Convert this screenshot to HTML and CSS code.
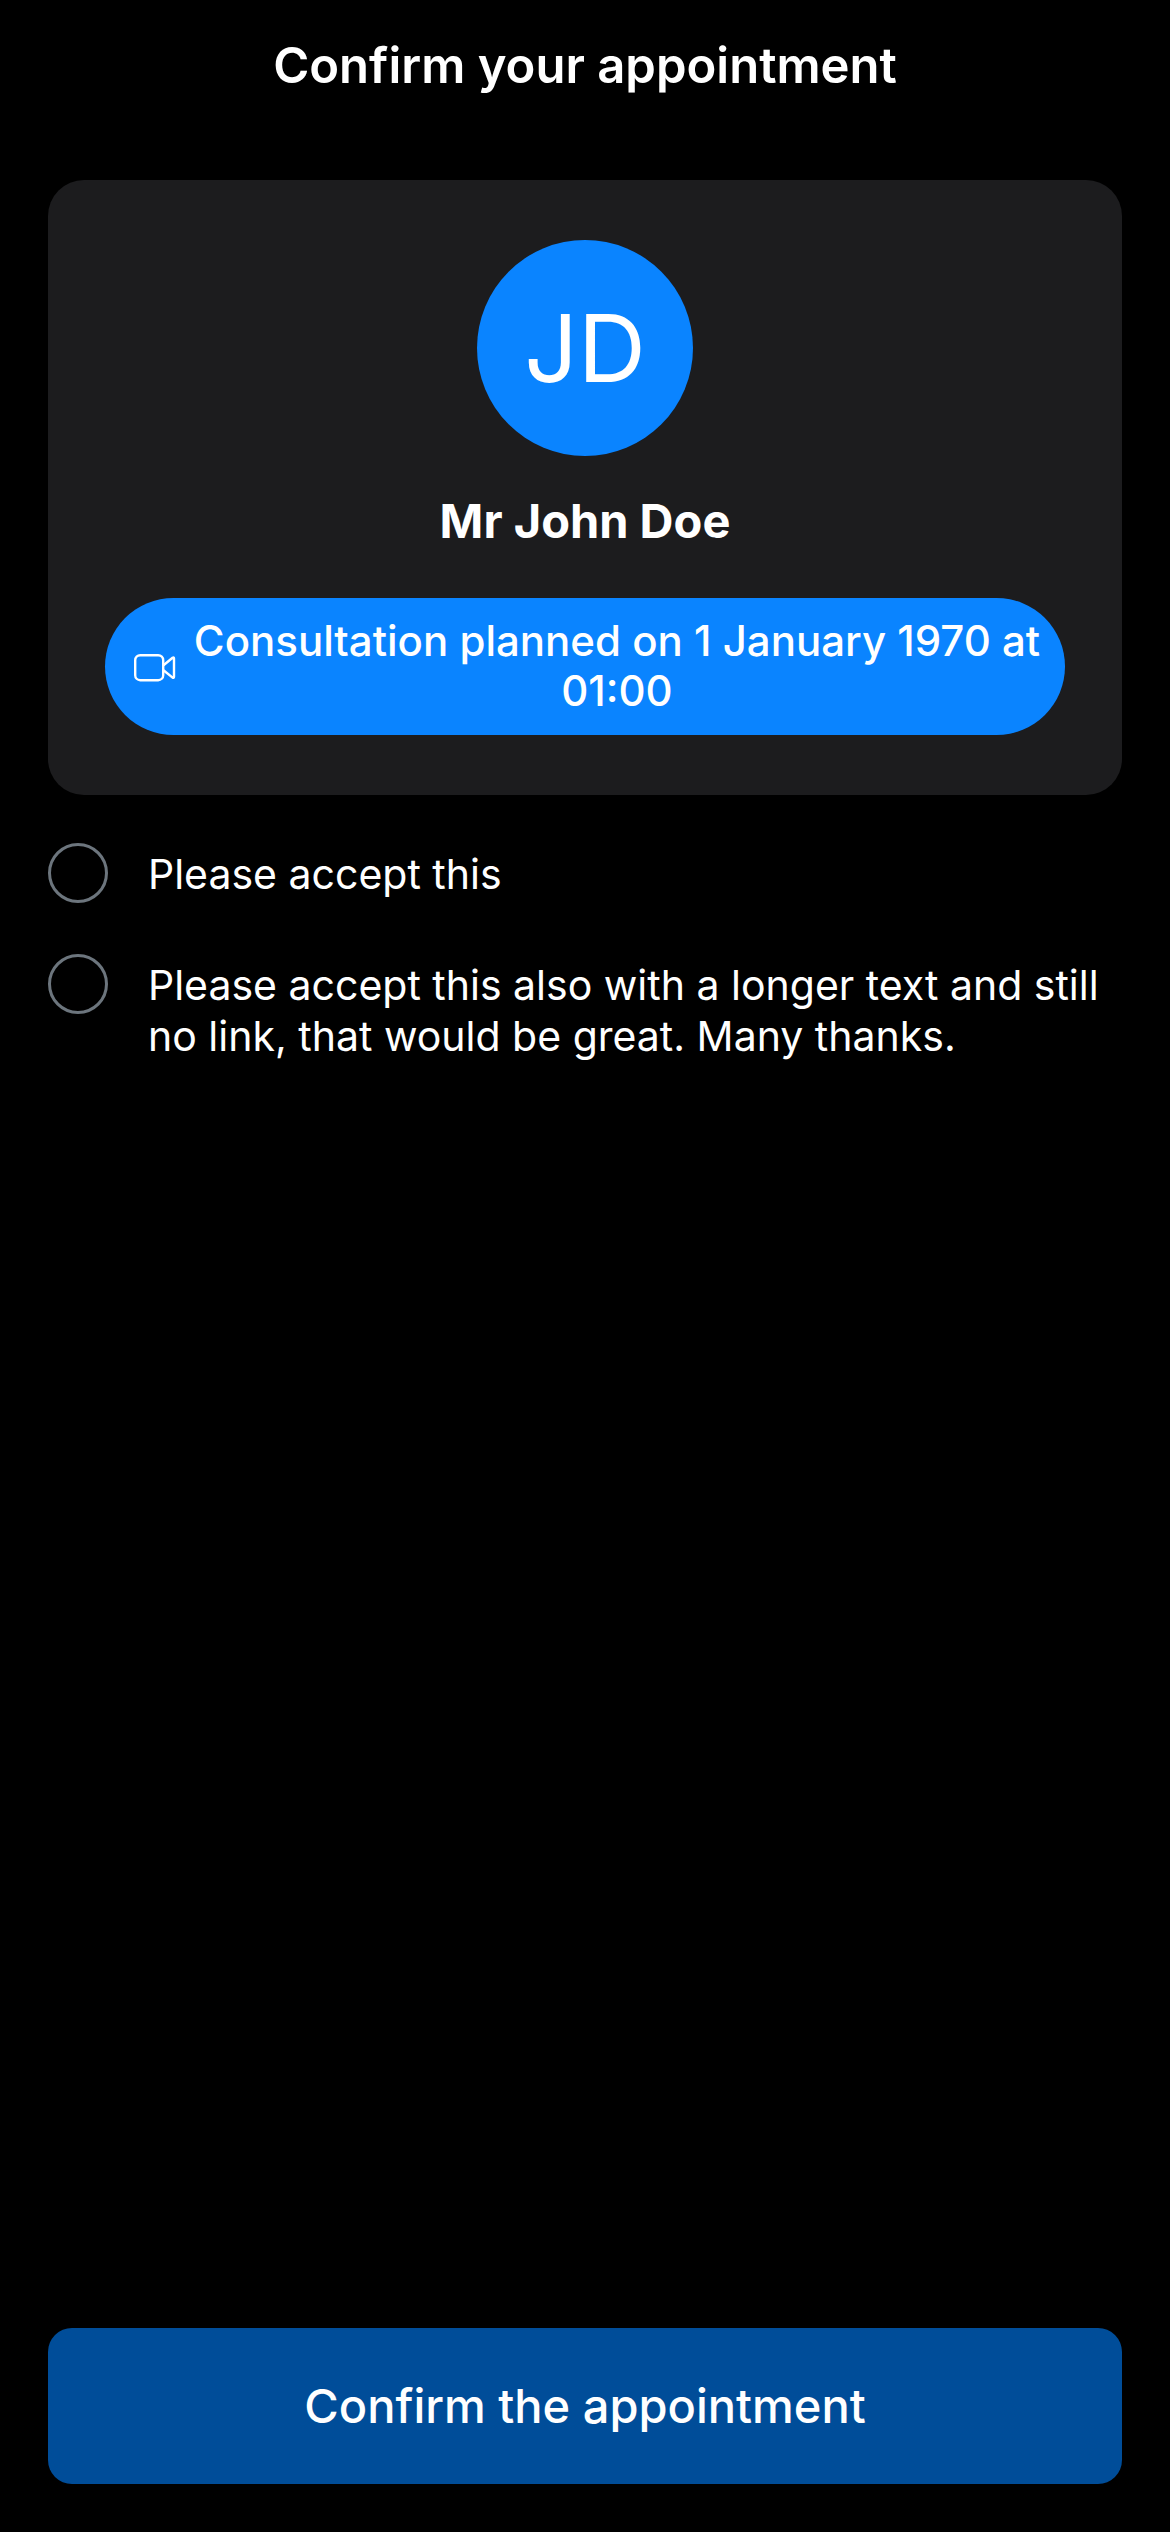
FILE: index.html
```html
<!DOCTYPE html>
<html lang="en">
<head>
<meta charset="utf-8">
<meta name="viewport" content="width=device-width">
<title>Confirm your appointment</title>
<link rel="stylesheet" href="styles.css">
</head>
<body>
<form class="screen">
  <h1 class="title">Confirm your appointment</h1>
  <section class="card">
    <div class="avatar">JD</div>
    <h2 class="name">Mr John Doe</h2>
    <div class="badge">
      <svg class="camera" viewBox="0 0 44 32" fill="none" stroke="currentColor" stroke-width="2.4" stroke-linejoin="round" aria-hidden="true">
        <rect x="2.2" y="5.2" width="28" height="25" rx="5"/>
        <path d="M30.5 15.2 39.6 7.8Q41 7 41 8.6V26.8Q41 28.4 39.6 27.6L30.5 20.2"/>
      </svg>
      <span class="when">Consultation planned on 1 January 1970 at 01:00</span>
    </div>
  </section>
  <div class="consents">
    <label class="consent"><input class="check" type="checkbox"><span>Please accept this</span></label>
    <label class="consent"><input class="check" type="checkbox"><span>Please accept this also with a longer text and still no link, that would be great. Many thanks.</span></label>
  </div>
  <button class="confirm" type="button">Confirm the appointment</button>
</form>
</body>
</html>
```

FILE: styles.css
```css
* { box-sizing: border-box; }
body { margin: 0; background: #000; color: #fff; font-family: Inter, "Liberation Sans", sans-serif; }
.screen { display: flex; flex-direction: column; min-height: 100vh; padding: 32px 48px 48px; }
.title { margin: 0 0 80px; font-size: 49px; line-height: 68px; font-weight: 600; text-align: center; }
.card { display: flex; flex-direction: column; align-items: center; padding: 60px 57px; border-radius: 36px; background: #1c1c1e; }
.avatar { display: flex; align-items: center; justify-content: center; width: 216px; height: 216px; border-radius: 50%; background: #0a84ff; font-size: 94px; }
.name { margin: 35px 0 47px; font-size: 47px; line-height: 60px; font-weight: 700; }
.badge { display: flex; align-items: center; gap: 12px; padding: 18px 20px 19px 28px; border-radius: 69px; background: #0a84ff; }
.camera { flex: none; width: 44px; height: 32px; }
.when { flex: 1; font-size: 42px; line-height: 50px; font-weight: 500; text-align: center; }
.consents { display: flex; flex-direction: column; gap: 51px; margin-top: 48px; }
.consent { display: flex; align-items: flex-start; gap: 40px; padding-right: 16px; font-size: 41px; line-height: 51px; }
.consent span { padding-top: 6px; }
.check { appearance: none; flex: none; width: 60px; height: 60px; margin: 0; border: 3px solid #6c757d; border-radius: 50%; }
.check:checked { background: #0a84ff; }
.confirm { margin-top: auto; padding: 48px; border: 0; border-radius: 24px; background: #004d99; color: #fff; font: 500 47px/60px Inter, "Liberation Sans", sans-serif; }
```
